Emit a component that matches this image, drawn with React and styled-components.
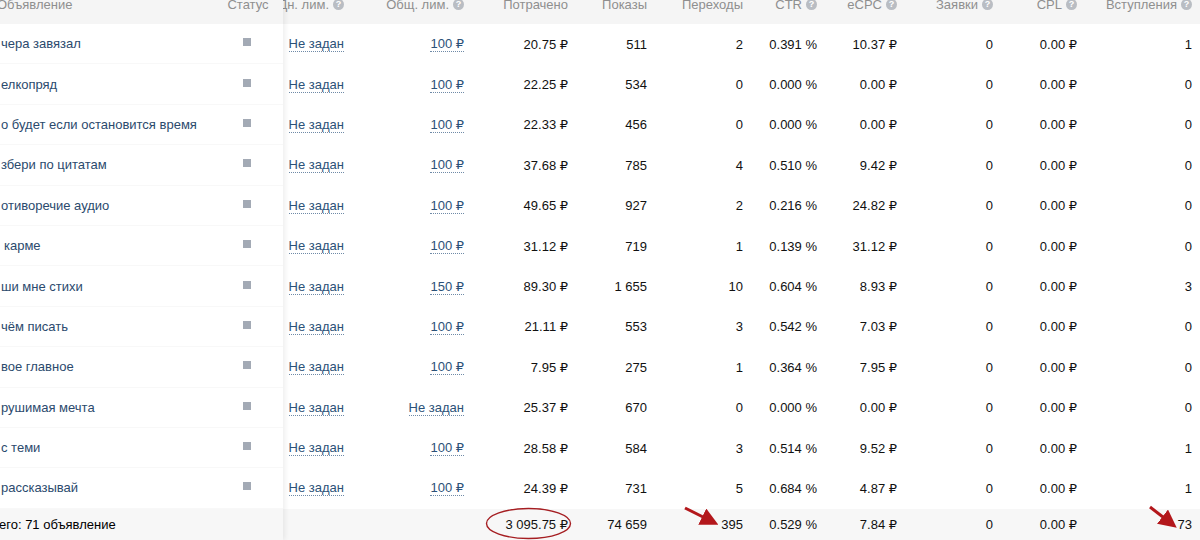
import styled, { createGlobalStyle } from 'styled-components'

const GlobalStyle = createGlobalStyle`
  html, body {
    margin: 0;
    padding: 0;
    background: #fff;
    overflow: hidden;
  }
  body {
    font-family: "Liberation Sans", "DejaVu Sans", Arial, sans-serif;
    font-size: 13px;
    color: #000;
  }
`

const ROW_H = '40.4px'
const HEAD_H = '24px'
const FOOT_H = '34px'
const COLS = '61px 120px 104px 79px 96px 74px 80px 96px 84px 115px 1fr'

const ROWS = [
  ['чера завязал', 'Не задан', '100 ₽', '20.75 ₽', '511', '2', '0.391 %', '10.37 ₽', '0', '0.00 ₽', '1'],
  ['елкопряд', 'Не задан', '100 ₽', '22.25 ₽', '534', '0', '0.000 %', '0.00 ₽', '0', '0.00 ₽', '0'],
  ['о будет если остановится время', 'Не задан', '100 ₽', '22.33 ₽', '456', '0', '0.000 %', '0.00 ₽', '0', '0.00 ₽', '0'],
  ['збери по цитатам', 'Не задан', '100 ₽', '37.68 ₽', '785', '4', '0.510 %', '9.42 ₽', '0', '0.00 ₽', '0'],
  ['отиворечие аудио', 'Не задан', '100 ₽', '49.65 ₽', '927', '2', '0.216 %', '24.82 ₽', '0', '0.00 ₽', '0'],
  ['карме', 'Не задан', '100 ₽', '31.12 ₽', '719', '1', '0.139 %', '31.12 ₽', '0', '0.00 ₽', '0'],
  ['ши мне стихи', 'Не задан', '150 ₽', '89.30 ₽', '1 655', '10', '0.604 %', '8.93 ₽', '0', '0.00 ₽', '3'],
  ['чём писать', 'Не задан', '100 ₽', '21.11 ₽', '553', '3', '0.542 %', '7.03 ₽', '0', '0.00 ₽', '0'],
  ['вое главное', 'Не задан', '100 ₽', '7.95 ₽', '275', '1', '0.364 %', '7.95 ₽', '0', '0.00 ₽', '0'],
  ['рушимая мечта', 'Не задан', 'Не задан', '25.37 ₽', '670', '0', '0.000 %', '0.00 ₽', '0', '0.00 ₽', '0'],
  ['с теми', 'Не задан', '100 ₽', '28.58 ₽', '584', '3', '0.514 %', '9.52 ₽', '0', '0.00 ₽', '1'],
  ['рассказывай', 'Не задан', '100 ₽', '24.39 ₽', '731', '5', '0.684 %', '4.87 ₽', '0', '0.00 ₽', '1'],
]

const HEADERS = [
  ['Дн. лим.', true], ['Общ. лим.', true], ['Потрачено'], ['Показы'], ['Переходы'],
  ['CTR', true], ['eCPC', true], ['Заявки', true], ['CPL', true], ['Вступления', true],
]

const TOTALS = ['', '', '3 095.75 ₽', '74 659', '395', '0.529 %', '7.84 ₽', '0', '0.00 ₽', '73']

const Table = styled.div`
  position: relative;
  display: flex;
  width: 1200px;
  height: 540px;
  overflow: hidden;
`

const Frozen = styled.div`
  width: 283px;
  flex: none;
  position: relative;
  z-index: 2;
  background: #fff;
  box-shadow: 2px 0 5px rgba(0, 0, 0, 0.07);
  overflow: hidden;
`

const Scroll = styled.div`
  flex: 1;
  overflow: hidden;
`

const LeftRow = styled.div`
  display: grid;
  grid-template-columns: 1fr 40px;
  padding-right: 15px;
  padding-bottom: ${({ $foot }) => ($foot ? '3px' : '0')};
  height: ${({ $h }) => $h};
  align-items: ${({ $top }) => ($top ? 'start' : 'center')};
  background: ${({ $bg }) => $bg || '#fff'};
  border-bottom: ${({ $line }) => ($line ? '1px solid #f8f8f8' : 'none')};
  box-sizing: border-box;
`

const RightRow = styled.div`
  display: grid;
  grid-template-columns: ${COLS};
  height: ${({ $h }) => $h};
  padding-bottom: ${({ $foot }) => ($foot ? '3px' : '0')};
  box-sizing: border-box;
  align-items: ${({ $top }) => ($top ? 'start' : 'center')};
  background: ${({ $bg }) => $bg || '#fff'};
`

const HeadText = styled.div`
  color: #8f8f8f;
  line-height: 13px;
  margin-top: -2px;
  white-space: nowrap;
  display: flex;
  align-items: center;
  justify-content: ${({ $center }) => ($center ? 'center' : 'flex-end')};
  gap: 4px;
`

const NameHead = styled(HeadText)`
  justify-content: flex-start;
  margin-left: -3px;
`

const Name = styled.div`
  color: #2b4a6d;
  white-space: nowrap;
  overflow: hidden;
  margin-left: ${({ $shift }) => $shift || '1px'};
`

const FootName = styled.div`
  color: #000;
  white-space: nowrap;
  margin-left: -1px;
`

const StatusCell = styled.div`
  display: flex;
  justify-content: center;
  margin-left: -2px;
`

const StatusSquare = styled.span`
  width: 8px;
  height: 8px;
  background: #a3aab5;
  margin-top: -3px;
`

const Cell = styled.div`
  display: flex;
  justify-content: flex-end;
  white-space: nowrap;
  color: #111;
`

const Dotted = styled.span`
  color: #2b5178;
  border-bottom: 1px dotted #6f8aa7;
  line-height: 15px;
`

const Help = styled.span`
  width: 11px;
  height: 11px;
  border-radius: 50%;
  background: #b9bdc3;
  color: #fff;
  font-size: 9px;
  font-weight: bold;
  line-height: 11px;
  text-align: center;
  flex: none;
`

const Marks = styled.svg`
  position: absolute;
  left: 0;
  top: 0;
  z-index: 3;
  pointer-events: none;
`

const HelpIcon = () => <Help>?</Help>

const App = () => (
  <>
    <GlobalStyle />
    <Table>
      <Frozen>
        <LeftRow $h={HEAD_H} $top $bg="#f5f5f5">
          <NameHead>Объявление</NameHead>
          <HeadText $center>Статус</HeadText>
        </LeftRow>
        {ROWS.map((r, i) => (
          <LeftRow key={i} $h={ROW_H} $line>
            <Name $shift={i === 5 ? '4px' : undefined}>{r[0]}</Name>
            <StatusCell><StatusSquare /></StatusCell>
          </LeftRow>
        ))}
        <LeftRow $h={FOOT_H} $foot $bg="#f7f7f7">
          <FootName>его: 71 объявление</FootName>
        </LeftRow>
      </Frozen>
      <Scroll>
        <RightRow $h={HEAD_H} $top $bg="#f5f5f5">
          {HEADERS.map(([t, help]) => (
            <HeadText key={t}>{t}{help && <HelpIcon />}</HeadText>
          ))}
        </RightRow>
        {ROWS.map((r, i) => (
          <RightRow key={i} $h={ROW_H}>
            {r.slice(1).map((v, j) => (
              <Cell key={j}>{j < 2 ? <Dotted>{v}</Dotted> : v}</Cell>
            ))}
          </RightRow>
        ))}
        <RightRow $h={FOOT_H} $foot $bg="#f7f7f7">
          {TOTALS.map((v, j) => <Cell key={j}>{v}</Cell>)}
        </RightRow>
      </Scroll>
      <Marks width="1200" height="540" viewBox="0 0 1200 540">
        <defs>
          <marker id="head" markerWidth="6" markerHeight="6" refX="4" refY="3" orient="auto" markerUnits="strokeWidth">
            <path d="M0,0 L6,3 L0,6 z" fill="#b3171b" />
          </marker>
        </defs>
        <ellipse cx="528.5" cy="523.5" rx="42" ry="15" fill="none" stroke="#a51e22" strokeWidth="1.4" />
        <line x1="685" y1="508" x2="713" y2="522" stroke="#b3171b" strokeWidth="3" markerEnd="url(#head)" />
        <line x1="1150" y1="507" x2="1172" y2="524" stroke="#b3171b" strokeWidth="3" markerEnd="url(#head)" />
      </Marks>
    </Table>
  </>
)

export default App
